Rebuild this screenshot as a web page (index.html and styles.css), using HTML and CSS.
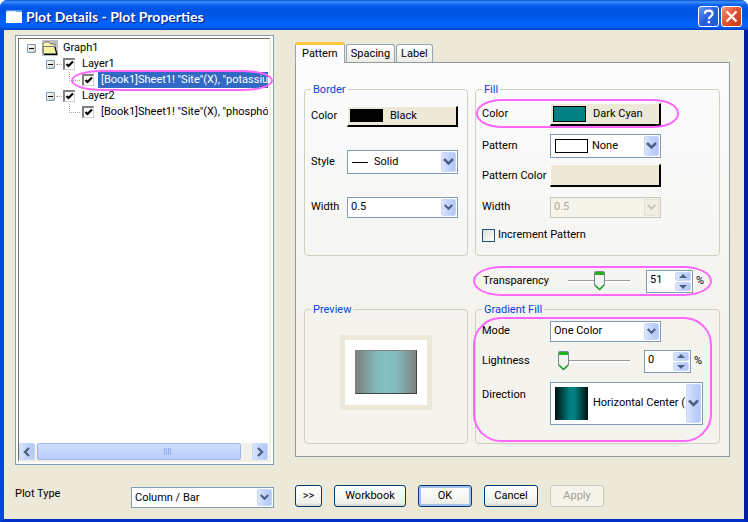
FILE: index.html
```html
<!DOCTYPE html>
<html lang="en">
<head>
<meta charset="utf-8">
<title>Plot Details - Plot Properties</title>
<link rel="stylesheet" href="styles.css">
</head>
<body>
<div class="window">
  <header class="titlebar">
    <svg class="app-icon" viewBox="0 0 16 13" width="16" height="13" aria-hidden="true"><path d="M0 0h16v13H0z" fill="#fff"/><path d="M0 0h16v2H0z" fill="#5a9cf8"/><path d="M1 1h9v1H1z" fill="#d8e8ff"/></svg>
    <h1>Plot Details - Plot Properties</h1>
    <button class="sys help" aria-label="Help"><svg viewBox="0 0 21 21" width="19" height="19"><path d="M6.500 7.500C6.500 4.500 8 4 10.500 4S15 5 15 7.500C15 10.500 10.800 10.500 10.800 13.500" fill="none" stroke="#fff" stroke-width="2.400"/><path d="M9.500 15.500h2.800v2.500H9.500z" fill="#fff"/></svg></button>
    <button class="sys close" aria-label="Close"><svg viewBox="0 0 21 21" width="19" height="19"><path d="M5 5l11 11M16 5L5 16" stroke="#fff" stroke-width="2.600"/></svg></button>
  </header>

  <main class="client">
    <section class="tree-box" aria-label="Layers">
      <div class="tree">
        <div class="node root">
          <button class="expander" aria-label="Collapse Graph1"></button>
          <svg class="folder" viewBox="0 0 16 16" width="16" height="16" aria-hidden="true"><path d="M0 0h16v16H0z" fill="#c0c0c0"/><path d="M1 13V4l2-2h4l2 2h4v3" fill="#fff8b0" stroke="#777" /><path d="M1.500 13.500L1 6.500h11.500l2 7z" fill="#f4f4a0" stroke="#777"/><path d="M2 14.500h13L13 7" fill="none" stroke="#000"/></svg>
          <span class="name">Graph1</span>
        </div>
        <div class="node layer">
          <button class="expander" aria-label="Collapse Layer1"></button><i class="dots"></i>
          <input class="tick" type="checkbox" id="l1" checked><label class="name" for="l1">Layer1</label>
        </div>
        <div class="node plot">
          <i class="elbow"></i>
          <input class="tick" type="checkbox" id="p1" checked><label class="name selected" for="p1">[Book1]Sheet1! "Site"(X), "potassiu</label>
          <i class="mark mark-node"></i>
        </div>
        <div class="node layer">
          <button class="expander" aria-label="Collapse Layer2"></button><i class="dots"></i>
          <input class="tick" type="checkbox" id="l2" checked><label class="name" for="l2">Layer2</label>
        </div>
        <div class="node plot">
          <i class="elbow"></i>
          <input class="tick" type="checkbox" id="p2" checked><label class="name" for="p2">[Book1]Sheet1! "Site"(X), "phosphó</label>
        </div>
        <div class="scrollbar">
          <button class="blue" aria-label="Scroll left"><svg viewBox="0 0 10 10" width="10" height="10"><path d="M7 1L3 5l4 4" fill="none" stroke="#4d6185" stroke-width="2.400"/></svg></button>
          <div class="rail"><div class="grip blue"><i></i><i></i><i></i><i></i></div></div>
          <button class="blue" aria-label="Scroll right"><svg viewBox="0 0 10 10" width="10" height="10"><path d="M3 1l4 4-4 4" fill="none" stroke="#4d6185" stroke-width="2.400"/></svg></button>
        </div>
      </div>
    </section>

    <section class="pages">
      <nav class="tabs" role="tablist">
        <button class="tab active" role="tab" aria-selected="true">Pattern</button>
        <button class="tab" role="tab">Spacing</button>
        <button class="tab" role="tab">Label</button>
      </nav>
      <div class="panel">
        <fieldset class="border-group">
          <legend>Border</legend>
          <div class="fields narrow">
            <label for="bcolor">Color</label>
            <button class="color" id="bcolor"><i class="swatch black"></i>Black</button>
            <label for="bstyle">Style</label>
            <div class="combo tall"><i class="line"></i><select class="after-line" id="bstyle"><option>Solid</option></select><svg class="arrow blue" viewBox="0 0 13 18"><path d="M2 6l4.500 4.500L11 6" /></svg></div>
            <label for="bwidth">Width</label>
            <div class="combo"><select id="bwidth"><option>0.5</option></select><svg class="arrow blue" viewBox="0 0 13 18"><path d="M2 6l4.500 4.500L11 6" /></svg></div>
          </div>
        </fieldset>

        <fieldset class="fill-group">
          <legend>Fill</legend>
          <div class="fields fill-fields">
            <label for="fcolor">Color</label>
            <button class="color" id="fcolor"><i class="swatch cyan"></i>Dark Cyan</button>
            <label for="fpattern">Pattern</label>
            <div class="combo tall"><i class="swatch none"></i><select class="after-swatch" id="fpattern"><option>None</option></select><svg class="arrow blue" viewBox="0 0 13 18"><path d="M2 6l4.500 4.500L11 6" /></svg></div>
            <label for="pcolor">Pattern Color</label>
            <button class="color" id="pcolor" aria-label="Pattern Color"></button>
            <label for="fwidth">Width</label>
            <div class="combo off"><select id="fwidth" disabled><option>0.5</option></select><svg class="arrow" viewBox="0 0 13 18"><path d="M2 6l4.500 4.500L11 6" /></svg></div>
            <div class="check"><input type="checkbox" id="incr"><label for="incr">Increment Pattern</label></div>
          </div>
          <i class="mark mark-color"></i>
        </fieldset>

        <div class="transparency">
          <label for="trans">Transparency</label>
          <input class="slider" type="range" id="trans" min="0" max="100" value="51">
          <div class="spin"><input type="text" value="51" aria-label="Transparency percent"><span class="steps"><button class="blue" aria-label="Increase"><svg viewBox="0 0 8 5" width="8" height="5"><path d="M4 0l4 4H0z"/></svg></button><button class="blue" aria-label="Decrease"><svg viewBox="0 0 8 5" width="8" height="5"><path d="M0 1h8L4 5z"/></svg></button></span></div>
          <span>%</span>
          <i class="mark mark-row"></i>
        </div>

        <fieldset class="preview-group">
          <legend>Preview</legend>
          <div class="preview"><div class="sample"></div></div>
        </fieldset>

        <fieldset class="gradient-group">
          <legend>Gradient Fill</legend>
          <div class="fields gradient-fields">
            <label for="mode">Mode</label>
            <div class="combo mode"><select id="mode"><option>One Color</option></select><svg class="arrow blue" viewBox="0 0 13 18"><path d="M2 6l4.500 4.500L11 6" /></svg></div>
            <label for="light">Lightness</label>
            <div class="light-row">
              <input class="slider" type="range" id="light" min="0" max="100" value="0">
              <div class="spin"><input type="text" value="0" aria-label="Lightness percent"><span class="steps"><button class="blue" aria-label="Increase"><svg viewBox="0 0 8 5" width="8" height="5"><path d="M4 0l4 4H0z"/></svg></button><button class="blue" aria-label="Decrease"><svg viewBox="0 0 8 5" width="8" height="5"><path d="M0 1h8L4 5z"/></svg></button></span></div>
              <span>%</span>
            </div>
            <label class="raised" for="dir">Direction</label>
            <div class="combo big"><i class="swatch grad"></i><select id="dir"><option>Horizontal Center (</option></select><svg class="arrow blue" viewBox="0 0 13 18"><path d="M2 6l4.500 4.500L11 6" /></svg></div>
          </div>
          <i class="mark mark-group"></i>
        </fieldset>
      </div>
    </section>
  </main>

  <footer class="footer">
    <div class="plot-type">
      <label for="ptype">Plot Type</label>
      <div class="combo"><select id="ptype"><option>Column / Bar</option></select><svg class="arrow blue" viewBox="0 0 13 18"><path d="M2 6l4.500 4.500L11 6" /></svg></div>
    </div>
    <div class="actions">
      <button class="push small">&gt;&gt;</button>
      <button class="push wide">Workbook</button>
      <button class="push default">OK</button>
      <button class="push">Cancel</button>
      <button class="push" disabled>Apply</button>
    </div>
  </footer>
</div>
</body>
</html>
```

FILE: styles.css
```css
* { box-sizing: border-box; }

body {
  margin: 0;
  background: #fff;
  font: 11px/14px Roboto, "Liberation Sans", sans-serif;
  color: #000;
}

button, input, select { font: inherit; color: inherit; }
button { padding: 0; }
h1 { margin: 0; }

.window {
  display: flex;
  flex-direction: column;
  min-height: 100vh;
  border: solid #0831d9;
  border-width: 0 4px 3px;
  border-left-color: #0048e0;
  border-right-color: #001ea0;
  border-bottom-color: #0030c8;
  border-radius: 8px 8px 0 0;
  background: #ece9d8;
}

/* Title bar */
.titlebar {
  display: flex;
  align-items: center;
  gap: 2px;
  height: 30px;
  margin: 0 -4px;
  padding: 3px 6px 0;
  border-radius: 7px 7px 0 0;
  background: linear-gradient(#0a4fd0 0, #3c92ff 2px, #0860ee 5px, #0054e3 9px, #0056e8 16px, #0064fc 24px, #0060f8 27px, #0040c8 30px);
}
.app-icon { margin-right: 2px; }
.titlebar h1 {
  flex: 1;
  font: bold 14px/18px Lato, Roboto, sans-serif;
  color: #fff;
  text-shadow: 1px 1px 1px #0a1883;
}
.sys {
  display: grid;
  place-items: center;
  width: 21px;
  height: 21px;
  border: 1px solid #fff;
  border-radius: 3px;
}
.help { background: linear-gradient(135deg, #6d94f8, #2a5de0 50%, #2458d8); }
.close { background: linear-gradient(135deg, #f09a7c, #e0502c 50%, #c83c10); }

/* Two-column body and footer */
.client, .footer {
  display: grid;
  grid-template-columns: 259px minmax(0, 1fr);
  column-gap: 21px;
  padding: 5px 14px 0 11px;
}

.blue {
  border: 1px solid #c8d6fb;
  border-radius: 2px;
  background: linear-gradient(90deg, #dbe6fd, #c1d3fb 50%, #b2c8f8);
}

/* Layer tree */
.tree-box {
  display: flex;
  padding: 2px;
  border: 1px solid #7f9db9;
  background: #fff;
}
.tree {
  flex: 1;
  min-width: 0;
  display: flex;
  flex-direction: column;
  padding-right: 1px;
  border: solid;
  border-width: 1px 2px 2px 1px;
  border-color: #716f64 #f1efe2 #f1efe2 #716f64;
}
.node {
  position: relative;
  display: flex;
  align-items: center;
  height: 16px;
  white-space: nowrap;
}
.root { padding-left: 8px; margin-top: 1px; }
.layer { padding-left: 27px; }
.plot { padding-left: 50px; }
.expander {
  width: 9px;
  height: 9px;
  border: 1px solid #7898b5;
  border-radius: 1px;
  background: linear-gradient(#000, #000) center / 5px 1px no-repeat, linear-gradient(135deg, #fff, #d0ccc0);
}
.folder { margin: 0 2px 0 6px; }
.dots { width: 6px; margin: 0 1px; border-top: 1px dotted #aca899; }
.elbow {
  align-self: flex-start;
  width: 11px;
  height: 9px;
  border: dotted #aca899;
  border-width: 0 0 1px 1px;
  margin-right: 2px;
}
.tick {
  appearance: none;
  flex: none;
  width: 12px;
  height: 12px;
  margin: 0 4px 0 0;
  border: solid;
  border-width: 2px 1px 1px 2px;
  border-color: #808080 #d4d0c8 #d4d0c8 #808080;
}
.tick:checked {
  background: url("data:image/svg+xml,%3Csvg xmlns='http://www.w3.org/2000/svg' viewBox='0 0 9 9'%3E%3Cpath d='M1.500 4l2 2L8 1.500' fill='none' stroke='%23000' stroke-width='2.200'/%3E%3C/svg%3E") center / 9px 9px no-repeat;
}
.name { padding: 1px 3px; }
.plot .name { flex: 1; padding: 1px 0 1px 3px; overflow: hidden; }
.selected { background: #316ac5; color: #fff; }

.scrollbar {
  display: flex;
  height: 17px;
  margin-top: auto;
  background: #f3f1ec;
}
.scrollbar button { display: grid; place-items: center; width: 16px; }
.rail { flex: 1; display: flex; padding: 0 11px 0 2px; }
.grip { flex: 1; display: flex; justify-content: center; align-items: center; gap: 1px; padding-left: 57px; background: linear-gradient(#d0dffd, #b9cdfb); border-color: #a0b5e8; }
.grip i { width: 1px; height: 7px; background: #8cb0f8; }

/* Tabs */
.pages { padding: 7px 0 8px; }
.tabs { display: flex; align-items: flex-end; gap: 1px; height: 20px; }
.tab {
  height: 18px;
  padding: 0 4px;
  border: 1px solid #91a7b4;
  border-bottom: 0;
  border-radius: 3px 3px 0 0;
  background: linear-gradient(#fff, #ecebe6);
}
.tab.active {
  z-index: 1;
  height: 21px;
  margin-bottom: -1px;
  padding: 0 6px;
  border-top: 3px solid #ffc73c;
  background: #fcfcfe;
}
.panel {
  display: grid;
  grid-template-columns: 164px minmax(0, 1fr);
  column-gap: 7px;
  padding: 20px 9px 12px 8px;
  border: 1px solid #919b9c;
  background: linear-gradient(#fcfcfe, #f4f3ee 65%);
}

/* Groups */
fieldset {
  position: relative;
  min-width: 0;
  margin: 0;
  padding: 0 6px 12px;
  border: 1px solid #d0d0bf;
  border-radius: 4px;
}
legend { height: 12px; padding: 0 2px; line-height: 14px; color: #0046d5; }
.fields {
  display: grid;
  grid-template-columns: 68px minmax(0, 1fr);
  align-items: center;
  white-space: nowrap;
}
.narrow { grid-template-columns: 36px minmax(0, 111px); grid-template-rows: 42px 50px 40px; }
.fill-fields { grid-template-rows: 32px 32px 27px 36px 20px; padding-top: 3px; }
.fill-group { padding-bottom: 10px; }
.gradient-fields { grid-template-rows: 32px 28px 56px; }

.color {
  display: flex;
  align-items: center;
  gap: 7px;
  width: 111px;
  height: 21px;
  padding-left: 2px;
  border: solid;
  border-width: 1px 2px 2px 1px;
  border-color: #fff #000 #000 #fff;
  background: #ece9d8;
}
.fill-fields .color { height: 23px; }
.swatch { flex: none; width: 33px; height: 16px; border: 1px solid #000; }
.black { height: 13px; background: #000; }
.cyan { background: #008080; }
.none { height: 14px; margin-left: 4px; background: #fff; }
.grad { height: 33px; margin: 0 4px; border: 0; background: linear-gradient(90deg, #001010, #008080 45%, #008080 60%, #001010); }
.line { width: 16px; height: 1px; margin-left: 4px; background: #000; }

.combo {
  position: relative;
  display: flex;
  align-items: center;
  width: 111px;
  height: 21px;
  border: 1px solid #7f9db9;
  background: #fff;
}
.combo.tall { height: 24px; }
.combo.big { width: 153px; height: 43px; }
.combo select {
  appearance: none;
  flex: 1;
  min-width: 0;
  height: 100%;
  margin-right: 17px;
  padding: 0 3px;
  border: 0;
  background: none;
}
.combo .after-line { padding-left: 6px; }
.combo .after-swatch { padding-left: 4px; }
.combo.big select { margin-right: 16px; padding: 0 0 0 1px; text-overflow: clip; }
.arrow { position: absolute; top: 1px; right: 1px; width: 15px; height: calc(100% - 2px); }
.arrow path { fill: none; stroke: #4d6185; stroke-width: 2.500; }
.combo.off { border-color: #c9c7ba; background: #f5f4ea; color: #aca899; }
.off select { color: #aca899; opacity: 1; }
.off .arrow { border: 1px solid #e3e1d4; background: #f0eee4; }
.off .arrow path { stroke: #c9c7ba; }

.check { grid-column: 1 / -1; display: flex; align-items: center; gap: 3px; }
.check input {
  appearance: none;
  width: 13px;
  height: 13px;
  margin: 0;
  border: 1px solid #1c5180;
  background: linear-gradient(135deg, #dcdcd7, #fff);
}

/* Sliders and spinners */
.slider {
  appearance: none;
  width: 77px;
  height: 21px;
  margin: 0;
  background: linear-gradient(#9d9c99, #9d9c99) 5px 9px / calc(100% - 10px) 1px no-repeat, linear-gradient(#fff, #fff) 5px 10px / calc(100% - 10px) 2px no-repeat;
}
.slider::-webkit-slider-thumb {
  appearance: none;
  width: 11px;
  height: 20px;
  background: url("data:image/svg+xml,%3Csvg xmlns='http://www.w3.org/2000/svg' viewBox='0 0 11 20'%3E%3Cpath d='M.5 1.500q0-1 1-1h8q1 0 1 1V14l-5 5-5-5z' fill='%23f3f3ef' stroke='%23778892'/%3E%3Cpath d='M1 1h9v3H1z' fill='%2321b121'/%3E%3Cpath d='M1 14l4.500 4.500L10 14' fill='none' stroke='%2321a121' stroke-width='1.500'/%3E%3C/svg%3E") no-repeat;
}
.spin { display: flex; width: 47px; height: 23px; padding: 1px; border: 1px solid #7f9db9; background: #fff; }
.spin input { flex: 1; min-width: 0; width: 0; padding: 0 0 3px 2px; border: 0; background: none; }
.steps { display: grid; gap: 1px; width: 16px; }
.steps button { display: grid; place-items: center; min-height: 0; }
.steps path { fill: #4d6185; }
.light-row { display: flex; align-items: center; padding-left: 8px; }
.light-row .spin { margin: 0 3px 0 9px; }

.transparency {
  position: relative;
  grid-column: 2;
  display: grid;
  grid-template-columns: 80px 72px 47px auto;
  align-items: center;
  justify-content: start;
  height: 26px;
  margin: 12px 0 9px;
  padding-left: 8px;
}
.transparency .slider { width: 72px; }
.transparency .spin { margin-left: 11px; }
.transparency > span { margin-left: 14px; }

.raised { align-self: start; padding-top: 13px; }

/* Preview */
.preview {
  width: 92px;
  height: 75px;
  margin: 20px auto 0;
  padding: 10px;
  border: 5px solid #ece9d8;
  background: #fff;
}
.sample {
  height: 44px;
  border: 1px solid #808080;
  border-right-color: #444;
  border-bottom-color: #444;
  background: linear-gradient(90deg, #808080, #82baba 35%, #82c0c0 50%, #82baba 68%, #808080);
}

/* Highlight outlines */
.mark { position: absolute; border: 2px solid #ff66ff; border-radius: 50%; pointer-events: none; }
.mark-node { left: 52px; right: -5px; top: -2px; bottom: -3px; border-radius: 32px / 11px; }
.mark-color { left: 0; top: 4px; width: 203px; height: 29px; border-radius: 26px / 14px; }
.mark-row { left: -2px; top: -2px; width: 239px; height: 30px; border-radius: 28px / 15px; }
.mark-group { left: -3px; top: 2px; width: 239px; height: 125px; border-radius: 28px; }

/* Footer */
.footer { padding-top: 20px; }
.plot-type { display: flex; align-items: flex-start; justify-content: space-between; padding-top: 2px; }
.plot-type .combo { width: 143px; }
.actions { display: flex; gap: 12px; }
.push {
  width: 54px;
  height: 22px;
  border: 1px solid #003c74;
  border-radius: 3px;
  background: linear-gradient(#fff, #f0f0ea 85%, #d6d0c5);
}
.small { width: 27px; }
.wide { width: 72px; }
.default { box-shadow: inset 0 0 0 2px #a4bff0; }
.push:disabled { border-color: #c9c7ba; background: #f5f4ea; color: #a1a192; }
```
